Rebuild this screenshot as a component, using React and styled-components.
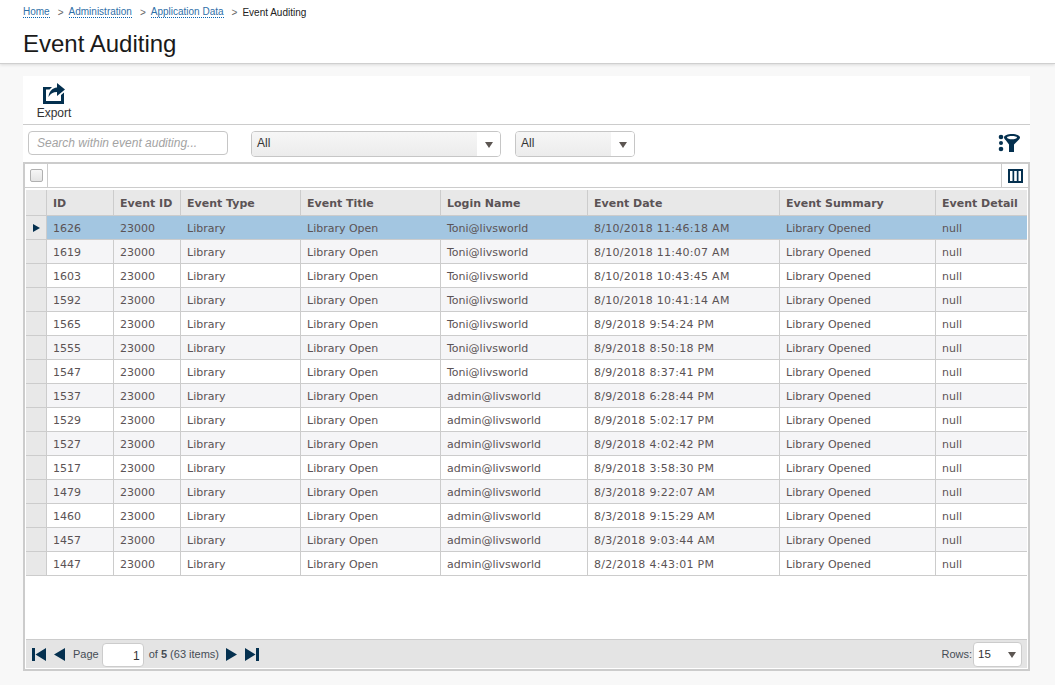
import React from 'react'
import styled, { createGlobalStyle } from 'styled-components'

const Global = createGlobalStyle`
html, body { margin: 0; padding: 0; background: #f8f8f8; }
* { box-sizing: border-box; }
`

const COLS = '20px 67px 67px 120px 140px 147px 192px 156px 92px'
const NAVY = '#04304f'

const rows = [
  ['1626', 'Toni@livsworld', '8/10/2018 11:46:18 AM'],
  ['1619', 'Toni@livsworld', '8/10/2018 11:40:07 AM'],
  ['1603', 'Toni@livsworld', '8/10/2018 10:43:45 AM'],
  ['1592', 'Toni@livsworld', '8/10/2018 10:41:14 AM'],
  ['1565', 'Toni@livsworld', '8/9/2018 9:54:24 PM'],
  ['1555', 'Toni@livsworld', '8/9/2018 8:50:18 PM'],
  ['1547', 'Toni@livsworld', '8/9/2018 8:37:41 PM'],
  ['1537', 'admin@livsworld', '8/9/2018 6:28:44 PM'],
  ['1529', 'admin@livsworld', '8/9/2018 5:02:17 PM'],
  ['1527', 'admin@livsworld', '8/9/2018 4:02:42 PM'],
  ['1517', 'admin@livsworld', '8/9/2018 3:58:30 PM'],
  ['1479', 'admin@livsworld', '8/3/2018 9:22:07 AM'],
  ['1460', 'admin@livsworld', '8/3/2018 9:15:29 AM'],
  ['1457', 'admin@livsworld', '8/3/2018 9:03:44 AM'],
  ['1447', 'admin@livsworld', '8/2/2018 4:43:01 PM'],
]

const Page = styled.div`
width: 1055px;
height: 685px;
overflow: hidden;
background: #f8f8f8;
font-family: "Liberation Sans", Arial, sans-serif;
`

const Header = styled.header`
height: 64px;
background: #fff;
border-bottom: 1px solid #cfcfcf;
box-shadow: 0 1px 3px rgba(0, 0, 0, 0.12);
padding: 6px 23px 0;
`

const Crumbs = styled.nav`
display: flex;
align-items: center;
height: 12px;
font-size: 10px;
color: #222;
`

const Crumb = styled.a`
color: #2f6fa8;
border-bottom: 1px dotted #0a63b0;
line-height: 10px;
`

const Sep = styled.span`
color: #666;
margin: 0 5px 0 8px;
`

const Title = styled.h1`
margin: 11px 0 0;
font-size: 24px;
font-weight: 400;
line-height: 30px;
color: #1a1a1a;
`

const Panel = styled.main`
margin: 12px 25px 0 23px;
background: #fff;
`

const Toolbar = styled.div`
height: 49px;
border-bottom: 1px solid #ccc;
padding: 7px 0 0 13px;
`

const ExportBtn = styled.div`
width: 36px;
display: flex;
flex-direction: column;
align-items: center;
font-size: 12px;
color: #333;
`

const ExportLabel = styled.span`
line-height: 14px;
margin-top: 2px;
`

const Filters = styled.div`
height: 37px;
display: flex;
align-items: flex-start;
padding: 6px 9px 0 5px;
`

const Search = styled.div`
width: 200px;
height: 24px;
border: 1px solid #c6c6c6;
border-radius: 4px;
background: #fff;
padding-left: 8px;
font-size: 12px;
font-style: italic;
line-height: 22px;
color: #a3a3a3;
`

const Select = styled.div`
width: ${p => p.$width}px;
height: 26px;
margin-left: ${p => p.$gap}px;
border: 1px solid #c6c6c6;
border-radius: 4px;
display: flex;
overflow: hidden;
font-size: 12px;
color: #333;
`

const SelectValue = styled.div`
flex: 1;
padding: 4px 0 0 5px;
background: linear-gradient(#f6f6f6, #ececec);
`

const SelectArrow = styled.div`
width: 23px;
background: #fff;
display: flex;
align-items: center;
justify-content: center;
`

const Caret = styled.i`
width: 0;
height: 0;
margin-top: 2px;
border-left: 4px solid transparent;
border-right: 4px solid transparent;
border-top: 6px solid #5c5652;
`

const FilterIcon = styled.div`
margin: 2px 0 0 auto;
display: flex;
`

const Grid = styled.section`
height: 509px;
border: 2px solid #ccc;
display: flex;
flex-direction: column;
`

const GridTop = styled.div`
height: 24px;
display: flex;
flex: none;
justify-content: space-between;
border-bottom: 1px solid #ccc;
`

const TopCell = styled.div`
width: ${p => p.$width}px;
display: flex;
align-items: center;
justify-content: center;
${p => p.$left ? 'border-right: 1px solid #ccc;' : 'border-left: 1px solid #ccc;'}
`

const Check = styled.span`
width: 13px;
height: 13px;
border: 1px solid #b0b0b0;
border-radius: 2px;
background: linear-gradient(#f6f6f6, #e4e4e4);
`

const Table = styled.div`
flex: 1;
padding: 2px 1px 0;
font-family: "DejaVu Sans", Verdana, sans-serif;
font-size: 11px;
color: #5b5355;
`

const Row = styled.div`
display: grid;
grid-template-columns: ${COLS};
height: ${p => p.$head ? 26 : 24}px;
width: 1001px;
background: ${p => p.$selected ? '#a3c6e1' : p.$odd ? '#f5f5f7' : '#fff'};
border-bottom: 1px solid #ccc;
${p => p.$head && `
  background: #e8e8e8;
  font-weight: 700;
`}
`

const Cell = styled.div`
display: flex;
align-items: center;
padding: 2px 0 0 6px;
border-left: 1px solid ${p => p.$selected ? '#a3c6e1' : '#ccc'};
white-space: nowrap;
overflow: hidden;
letter-spacing: ${p => p.$spaced ? '0.28px' : 'normal'};
`

const RowHead = styled.div`
background: #e8e8e8;
display: flex;
align-items: center;
justify-content: center;
`

const Pointer = styled.i`
width: 0;
height: 0;
border-top: 4.5px solid transparent;
border-bottom: 4.5px solid transparent;
border-left: 7px solid ${NAVY};
`

const Footer = styled.div`
height: 29px;
flex: none;
margin: 0 1px 1px;
background: #e4e4e4;
border-top: 1px solid #ccc;
display: flex;
align-items: center;
padding: 0 5px 0 6px;
font-size: 11px;
color: #444c55;
`

const PagerBtn = styled.svg`
display: block;
margin-left: ${p => p.$ml || 0}px;
margin-right: ${p => p.$mr || 0}px;
flex: none;
`

const PageInput = styled.div`
width: 42px;
height: 24px;
margin: 1px 5px 0 3px;
background: #fff;
border: 1px solid #ccc;
border-radius: 4px;
text-align: right;
padding: 5px 3px 0 0;
font-size: 12px;
color: #333;
`

const RowsLabel = styled.span`
margin-left: auto;
font-size: 11px;
`

const RowsSelect = styled.div`
width: 49px;
height: 25px;
margin-left: 1px;
background: #fff;
border: 1px solid #ccc;
border-radius: 4px;
display: flex;
align-items: center;
justify-content: space-between;
padding: 0 5px 0 4px;
font-size: 11.5px;
color: #333;
`

const heads = ['ID', 'Event ID', 'Event Type', 'Event Title', 'Login Name', 'Event Date', 'Event Summary', 'Event Detail']

const App = () => {
  return (
    <Page>
      <Global />
      <Header>
        <Crumbs>
          <Crumb>Home</Crumb><Sep>&gt;</Sep>
          <Crumb>Administration</Crumb><Sep>&gt;</Sep>
          <Crumb>Application Data</Crumb><Sep>&gt;</Sep>
          <span>Event Auditing</span>
        </Crumbs>
        <Title>Event Auditing</Title>
      </Header>
      <Panel>
        <Toolbar>
          <ExportBtn>
            <svg width="24" height="21" viewBox="0 0 24 21">
              <path fill={NAVY} d="M1 4h9L7.500 6.500H4V18h15v-6l3-2.500V21H1z" />
              <path fill={NAVY} d="M15 0l8 6.500-8 6.500V9c-4 0-6.500 1.500-8.500 5 .5-5.500 3.500-9 8.500-9.500z" />
            </svg>
            <ExportLabel>Export</ExportLabel>
          </ExportBtn>
        </Toolbar>
        <Filters>
          <Search>Search within event auditing...</Search>
          <Select $width={250} $gap={23}>
            <SelectValue>All</SelectValue>
            <SelectArrow><Caret /></SelectArrow>
          </Select>
          <Select $width={120} $gap={14}>
            <SelectValue>All</SelectValue>
            <SelectArrow><Caret /></SelectArrow>
          </Select>
          <FilterIcon>
            <svg width="23" height="20" viewBox="0 0 23 20">
              <circle cx="3" cy="4" r="2.300" fill={NAVY} />
              <circle cx="3" cy="10" r="2" fill={NAVY} />
              <circle cx="3" cy="16" r="2.300" fill={NAVY} />
              <path fill={NAVY} fillRule="evenodd" d="M6 4.500C6 2.300 10 1 14 1s8 1.300 8 3.500c0 1-1 2-2 3l-4 4V19h-5v-7.500l-3-4c-1-1-2-2-2-3zm3 0c0 1 2.500 1.800 5 1.800s5-.8 5-1.800-2.500-1.500-5-1.500-5 .5-5 1.500z" />
            </svg>
          </FilterIcon>
        </Filters>
        <Grid>
          <GridTop>
            <TopCell $left $width={23}><Check /></TopCell>
            <TopCell $width={27}>
              <svg width="15" height="14" viewBox="0 0 15 14">
                <path fill={NAVY} fillRule="evenodd" d="M0 0h15v14H0zM2 2v10h2.500V2zm4.200 0v10h2.600V2zm4.300 0v10H13V2z" />
              </svg>
            </TopCell>
          </GridTop>
          <Table>
            <Row $head>
              <RowHead />
              {heads.map(h => <Cell key={h}>{h}</Cell>)}
            </Row>
            {rows.map((r, i) => (
              <Row key={r[0]} $selected={i === 0} $odd={i % 2 === 1}>
                <RowHead>{i === 0 && <Pointer />}</RowHead>
                {[r[0], '23000', 'Library', 'Library Open', r[1], r[2], 'Library Opened', 'null'].map((v, j) => (
                  <Cell key={j} $selected={i === 0 && j > 0} $spaced={j === 5}>{v}</Cell>
                ))}
              </Row>
            ))}
          </Table>
          <Footer>
            <PagerBtn $mr={8} width="14" height="13" viewBox="0 0 14 13">
              <path fill={NAVY} d="M0 0h3v13H0zM14 0v13L3.500 6.500z" />
            </PagerBtn>
            <PagerBtn $mr={8} width="11" height="13" viewBox="0 0 11 13">
              <path fill={NAVY} d="M11 0v13L0 6.500z" />
            </PagerBtn>
            <span>Page</span>
            <PageInput>1</PageInput>
            <span>of <b>5</b> (63 items)</span>
            <PagerBtn $ml={7} $mr={8} width="11" height="13" viewBox="0 0 11 13">
              <path fill={NAVY} d="M0 0v13l11-6.500z" />
            </PagerBtn>
            <PagerBtn width="14" height="13" viewBox="0 0 14 13">
              <path fill={NAVY} d="M0 0v13l10.500-6.500zM11 0h3v13h-3z" />
            </PagerBtn>
            <RowsLabel>Rows:</RowsLabel>
            <RowsSelect>15<Caret /></RowsSelect>
          </Footer>
        </Grid>
      </Panel>
    </Page>
  )
}

export default App
